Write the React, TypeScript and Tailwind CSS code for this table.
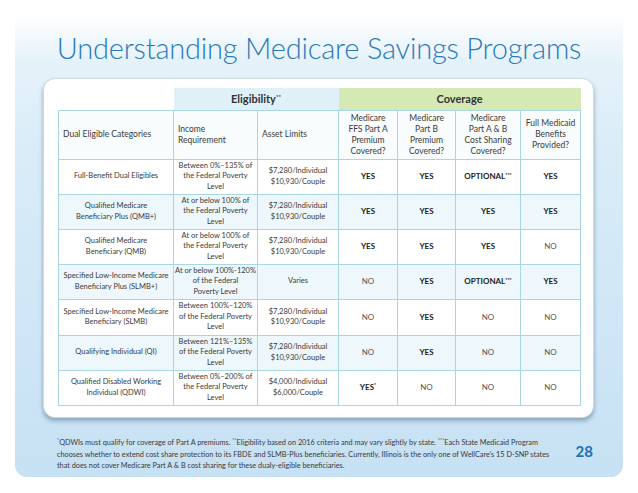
import React from "react";

type Row = {
  cat: React.ReactNode;
  income: React.ReactNode;
  asset: React.ReactNode;
  cov: React.ReactNode[];
};

const assetStd = (
  <>
    $7,280/Individual
    <br />
    $10,930/Couple
  </>
);

const Y = <span className="font-bold text-[#222]">YES</span>;
const N = <span className="text-[#555]">NO</span>;
const OPT = (
  <span className="font-bold text-[#222]">
    OPTIONAL<sup className="text-[5px] -top-[2px]">***</sup>
  </span>
);

const rows: Row[] = [
  {
    cat: <>Full-Benefit Dual Eligibles</>,
    income: (
      <>
        Between 0%–135% of
        <br />
        the Federal Poverty
        <br />
        Level
      </>
    ),
    asset: assetStd,
    cov: [Y, Y, OPT, Y],
  },
  {
    cat: (
      <>
        Qualified Medicare
        <br />
        Beneficiary Plus (QMB+)
      </>
    ),
    income: (
      <>
        At or below 100% of
        <br />
        the Federal Poverty
        <br />
        Level
      </>
    ),
    asset: assetStd,
    cov: [Y, Y, Y, Y],
  },
  {
    cat: (
      <>
        Qualified Medicare
        <br />
        Beneficiary (QMB)
      </>
    ),
    income: (
      <>
        At or below 100% of
        <br />
        the Federal Poverty
        <br />
        Level
      </>
    ),
    asset: assetStd,
    cov: [Y, Y, Y, N],
  },
  {
    cat: (
      <>
        Specified Low-Income Medicare
        <br />
        Beneficiary Plus (SLMB+)
      </>
    ),
    income: (
      <>
        At or below 100%-120%
        <br />
        of the Federal
        <br />
        Poverty Level
      </>
    ),
    asset: <>Varies</>,
    cov: [N, Y, OPT, Y],
  },
  {
    cat: (
      <>
        Specified Low-Income Medicare
        <br />
        Beneficiary (SLMB)
      </>
    ),
    income: (
      <>
        Between 100%–120%
        <br />
        of the Federal Poverty
        <br />
        Level
      </>
    ),
    asset: assetStd,
    cov: [N, Y, N, N],
  },
  {
    cat: <>Qualifying Individual (QI)</>,
    income: (
      <>
        Between 121%–135%
        <br />
        of the Federal Poverty
        <br />
        Level
      </>
    ),
    asset: assetStd,
    cov: [N, Y, N, N],
  },
  {
    cat: (
      <>
        Qualified Disabled Working
        <br />
        Individual (QDWI)
      </>
    ),
    income: (
      <>
        Between 0%–200% of
        <br />
        the Federal Poverty
        <br />
        Level
      </>
    ),
    asset: (
      <>
        $4,000/Individual
        <br />
        $6,000/Couple
      </>
    ),
    cov: [
      <span className="font-bold text-[#222]">
        YES<sup className="text-[5px] -top-[3px]">*</sup>
      </span>,
      N,
      N,
      N,
    ],
  },
];

const covHeads = [
  ["Medicare", "FFS Part A", "Premium", "Covered?"],
  ["Medicare", "Part B", "Premium", "Covered?"],
  ["Medicare", "Part A & B", "Cost Sharing", "Covered?"],
  ["Full Medicaid", "Benefits", "Provided?"],
];

export default function App() {
  const cell = "border border-[#a9d6e2] text-center align-middle p-0";
  const mark = "text-[5px] relative -top-[3px] align-baseline";
  return (
    <div
      className="w-[638px] h-[493px] bg-white overflow-hidden"
      style={{ fontFamily: "Lato, 'Open Sans', sans-serif" }}
    >
      <div className="mx-[15px] h-[477px] rounded-b-[12px] bg-[linear-gradient(180deg,#ffffff_0px,#ffffff_14px,#e6f2fa_60px,#d9ecf8_150px,#cfe6f6_330px,#c6e1f3_477px)] flex flex-col">
        <h1 className="text-center text-[29px] leading-[34px] font-light text-[#2a7ab9] pt-[31px] h-[78px] tracking-[-0.2px]">
          Understanding Medicare Savings Programs
        </h1>

        <div className="ml-[28px] mr-[29px] h-[340px] rounded-[12px] bg-white border border-[#c9d9e6] shadow-[0_3px_4px_rgba(60,90,120,0.45)] pt-[9px] pl-[14px]">
          <table className="border-collapse table-fixed w-[522px] text-[#3a3a3a]">
            <colgroup>
              <col className="w-[115px]" />
              <col className="w-[84px]" />
              <col className="w-[81px]" />
              <col className="w-[59px]" />
              <col className="w-[58px]" />
              <col className="w-[65px]" />
              <col className="w-[60px]" />
            </colgroup>
            <tbody>
              <tr className="h-[22px]">
                <td className="p-0" />
                <td colSpan={2} className="p-0 bg-[#dff0f8] text-center text-[11px] font-bold text-[#333]">
                  Eligibility<sup className="text-[6px] -top-[4px]">**</sup>
                </td>
                <td colSpan={4} className="p-0 bg-[#d5e9b5] text-center text-[11px] font-bold text-[#333]">
                  Coverage
                </td>
              </tr>
              <tr className="h-[49px] bg-[#f8fcfd] text-[8.5px] leading-[11px]">
                <td className={`${cell} text-left pl-[4px]`}>Dual Eligible Categories</td>
                <td className={`${cell} text-left pl-[4px]`}>
                  Income
                  <br />
                  Requirement
                </td>
                <td className={`${cell} text-left pl-[4px]`}>Asset Limits</td>
                {covHeads.map((h, i) => (
                  <td key={i} className={cell}>
                    {h.map((l, j) => (
                      <div key={j}>{l}</div>
                    ))}
                  </td>
                ))}
              </tr>
              {rows.map((r, i) => (
                <tr
                  key={i}
                  className={`${i === 4 ? "h-[36px]" : "h-[35px]"} ${i % 2 === 1 ? "bg-[#eef7fb]" : "bg-white"} text-[7.5px] leading-[10.5px]`}
                >
                  <td className={cell}>{r.cat}</td>
                  <td className={cell}>{r.income}</td>
                  <td className={cell}>{r.asset}</td>
                  {r.cov.map((c, j) => (
                    <td key={j} className={`${cell} text-[8px]`}>
                      {c}
                    </td>
                  ))}
                </tr>
              ))}
            </tbody>
          </table>
        </div>

        <div className="flex items-center pl-[42px] pr-[30px] pt-[19px]">
          <div className="text-[7.3px] leading-[11px] text-[#3a3a3a] whitespace-nowrap">
            <div>
              <span className={mark}>*</span>QDWIs must qualify for coverage of Part A premiums.{" "}
              <span className={mark}>**</span>Eligibility based on 2016 criteria and may vary slightly by state.{" "}
              <span className={mark}>***</span>Each State Medicaid Program
            </div>
            <div>
              chooses whether to extend cost share protection to its FBDE and SLMB-Plus beneficiaries. Currently, Illinois
              is the only one of WellCare's 15 D-SNP states
            </div>
            <div>that does not cover Medicare Part A &amp; B cost sharing for these dualy-eligible beneficiaries.</div>
          </div>
          <div className="ml-auto text-[15px] font-bold text-[#1f6fb4] -mt-[6px]">28</div>
        </div>
      </div>
    </div>
  );
}
